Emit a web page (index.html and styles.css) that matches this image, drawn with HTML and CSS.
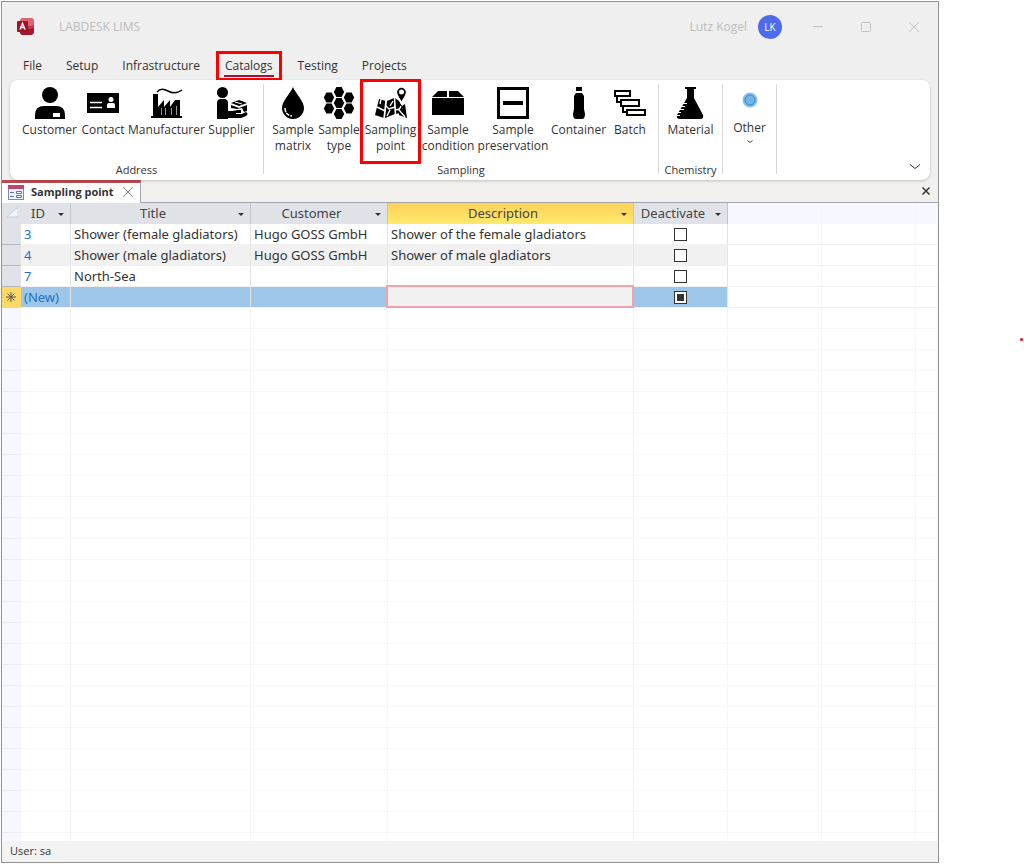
FILE: index.html
```html
<!DOCTYPE html>
<html lang="en">
<head>
<meta charset="utf-8">
<title>LABDESK LIMS</title>
<link rel="stylesheet" href="styles.css">
</head>
<body>
<div class="window">
  <header class="titlebar">
    <svg class="app-icon" width="18" height="18" viewBox="0 0 18 18" aria-hidden="true">
      <rect x="3" y="0" width="14" height="17" rx="4" fill="#c6324b"/>
      <path d="M3 3q0-3 4-3h6q4 0 4 3v3q-1 2-5 2H3z" fill="#dc6577"/>
      <path d="M3 11h9q4 0 5-2v5q-1 3-4 3H6q-3 0-3-3z" fill="#a3172f"/>
      <rect x="0" y="3" width="11" height="11" rx="1" fill="#a50f28"/>
      <path d="M3 11.500 5.500 5.500 8 11.500M4 9.500h3" fill="none" stroke="#fff" stroke-width="1.500"/>
    </svg>
    <span class="app-title">LABDESK LIMS</span>
    <span class="user-name">Lutz Kogel</span>
    <button class="avatar" type="button">LK</button>
    <div class="window-controls">
      <button type="button" aria-label="Minimize"><svg width="12" height="12" viewBox="0 0 12 12"><path d="M1 5.500h10"/></svg></button>
      <button type="button" aria-label="Maximize"><svg width="12" height="12" viewBox="0 0 12 12"><rect x="1.500" y="1.500" width="9" height="9" rx="1"/></svg></button>
      <button type="button" aria-label="Close"><svg width="12" height="12" viewBox="0 0 12 12"><path d="M1 1l10 10M11 1 1 11"/></svg></button>
    </div>
  </header>

  <nav class="menu">
    <button type="button">File</button>
    <button type="button">Setup</button>
    <button type="button">Infrastructure</button>
    <button type="button" class="active marked">Catalogs</button>
    <button type="button">Testing</button>
    <button type="button">Projects</button>
  </nav>

  <section class="ribbon">
    <div class="group">
      <div class="tools address">
        <button type="button"><svg width="32" height="32" viewBox="0 0 32 32"><circle cx="16" cy="8" r="8"/><path fill-rule="evenodd" d="M1 32v-4q0-9 9-9h12q9 0 9 9v4zM19 26v4h7v-4z"/></svg><span>Customer</span></button>
        <button type="button"><svg width="32" height="32" viewBox="0 0 32 32"><path d="M0 6h32v20H0z"/><path d="M3 15.500h12M3 20.500h12" stroke="#fff" stroke-width="1.500"/><circle cx="24" cy="12.500" r="2.500" fill="#fff"/><path d="M20 21v-3q0-2 2-2h4q2 0 2 2v3z" fill="#fff"/></svg><span>Contact</span></button>
        <button type="button"><svg width="32" height="32" viewBox="0 0 32 32"><path d="M0 31v-2h2V7h5v13l6-7v7l6-7v7l5-7h5v16h2v2z"/><path d="M6 5Q10 0 17 4t14-1" fill="none" stroke="#000" stroke-width="1.500"/><path d="M10.500 21v7M14.500 21v7M20.500 21v7M25.500 19v9" stroke="#fff" stroke-width=".6"/></svg><span>Manufacturer</span></button>
        <button type="button"><svg width="32" height="32" viewBox="0 0 32 32"><circle cx="6.500" cy="5.500" r="5.500"/><path d="M1 32V16q0-4 4-4h3q4 0 4 4v8h4l6-1h3v3h-5v1h6l4-2q3 2 0 4l-5 2H12v1zM15 16l8-3 8 3-8 3zM15 18l8 3 8-3v6l-3 1-2-4-5 1-6-1z"/><path d="M19 15l7 2" stroke="#fff"/></svg><span>Supplier</span></button>
      </div>
      <div class="group-name">Address</div>
    </div>
    <div class="group">
      <div class="tools sampling">
        <button type="button"><svg width="32" height="32" viewBox="0 0 32 32"><path d="M16 0c3 7 11 14 11 21a11 11 0 0 1-22 0C5 14 13 7 16 0z"/><path d="M8 21q0 7 7 8" fill="none" stroke="#fff" stroke-width="1.500" stroke-dasharray="4 1"/></svg><span>Sample matrix</span></button>
        <button type="button"><svg width="32" height="32" viewBox="0 0 32 32"><defs><path id="hex" d="M-5.200 0l2.600-4.900h5.200L5.200 0 2.600 4.900h-5.200z"/></defs><use href="#hex" x="16" y="5"/><use href="#hex" x="6" y="10.500"/><use href="#hex" x="26" y="10.500"/><use href="#hex" x="16" y="16"/><use href="#hex" x="6" y="21.500"/><use href="#hex" x="26" y="21.500"/><use href="#hex" x="16" y="27"/></svg><span>Sample type</span></button>
        <button type="button" class="marked"><svg width="32" height="32" viewBox="0 0 32 32"><path d="M4 12l7 2-2 17-9-3zM12 14l7-3 1 16-10 4zM20 11l4 3 3 5 3-2 2 14-11-4z"/><path d="M2 20l8 4M10 18l4 4 6-2M12 29l3-6M18 14l-3 5M20 23l5-1M26 19l-2 4 6 7M6 12l-1 5M20 28l4-1M11 13l-2 18M19.500 11l1 17" fill="none" stroke="#fff" stroke-width="1.400"/><path d="M26.500 1.500a3.500 3.500 0 0 1 3.500 3.700c0 2.300-2 5-3.500 8.300-1.500-3.300-3.500-6-3.500-8.300a3.500 3.500 0 0 1 3.500-3.700z" stroke="#fff" stroke-width="4"/><path d="M26.500 1.200a3.800 3.800 0 0 1 3.800 4c0 2.300-2 5-3.800 8.300-1.800-3.300-3.800-6-3.800-8.300a3.800 3.800 0 0 1 3.800-4z" stroke="#000"/><circle cx="26.500" cy="5" r="2.500" fill="#fff"/></svg><span>Sampling point</span></button>
        <button type="button"><svg width="32" height="32" viewBox="0 0 32 32"><path d="M6 4h9v6H0zM17 4h9l6 6H17zM0 11h32v17H0z"/></svg><span>Sample condition</span></button>
        <button type="button"><svg width="32" height="32" viewBox="0 0 32 32"><path d="M1.500 1.500h29v29h-29z" fill="none" stroke="#000" stroke-width="3"/><path d="M6 16h20" stroke="#000" stroke-width="4"/></svg><span>Sample preservation</span></button>
        <button type="button"><svg width="32" height="32" viewBox="0 0 32 32"><path d="M13 0h6v4h-6zM13 6h6l2 3v13l1 5q0 5-3 5h-6q-3 0-3-5l1-5V9z"/></svg><span>Container</span></button>
        <button type="button"><svg width="32" height="32" viewBox="0 0 32 32"><path d="M1 4h15v5H1zM7 13h18v6H7zM13 23h18v5H13zM3 9v6h4M9 19v6h4" fill="none" stroke="#000" stroke-width="2"/></svg><span>Batch</span></button>
      </div>
      <div class="group-name">Sampling</div>
    </div>
    <div class="group">
      <div class="tools chemistry">
        <button type="button"><svg width="32" height="32" viewBox="0 0 32 32"><path d="M10 0h11v2h-2v9l9 17q1 4-3 4H5q-4 0-3-4l10-17V2h-2z"/><path d="M7 16.500h5M6 19.500h4M4 22.500h5M2 25.500h4M1 28.500h4" stroke="#fff"/></svg><span>Material</span></button>
      </div>
      <div class="group-name">Chemistry</div>
    </div>
    <div class="group">
      <div class="tools other">
        <button type="button"><svg width="32" height="26" viewBox="0 0 32 26"><circle cx="16" cy="13" r="7.500" fill="#83c0ed"/><circle cx="16" cy="13" r="5" fill="#74b4e6" stroke="#3487c7"/></svg><span>Other</span><svg class="drop" width="8" height="6" viewBox="0 0 8 6"><path d="M1.500 1.500 4 3.500l2.500-2"/></svg></button>
      </div>
    </div>
    <button class="collapse" type="button" aria-label="Collapse ribbon"><svg width="12" height="8" viewBox="0 0 12 8"><path d="M1 1.500l5 4 5-4"/></svg></button>
  </section>

  <div class="doc-tabs">
    <div class="doc-tab">
      <svg width="16" height="15" viewBox="0 0 16 15" aria-hidden="true"><rect x=".5" y=".5" width="15" height="14" fill="#eef0fa" stroke="#8188ae"/><path d="M0 0h16v4H0z" fill="#bc4771"/><path d="M2 7.500h4M2 11.500h4" stroke="#6870a0"/><path d="M8.500 6.500h5v2h-5zM8.500 10.500h5v2h-5z" fill="#fff" stroke="#6870a0"/></svg>
      <span>Sampling point</span>
      <button type="button" aria-label="Close tab"><svg width="12" height="12" viewBox="0 0 12 12"><path d="M1 1l10 10M11 1 1 11"/></svg></button>
    </div>
    <button class="close-all" type="button" aria-label="Close"><svg width="8" height="8" viewBox="0 0 8 8"><path d="M.5.5l7 7M7.500.5l-7 7"/></svg></button>
  </div>

  <main class="sheet">
    <table>
      <colgroup><col class="c-select"><col class="c-id"><col class="c-title"><col class="c-customer"><col class="c-description"><col class="c-check"><col class="c-check"><col class="c-check"><col></colgroup>
      <thead>
        <tr>
          <th class="corner"><svg width="12" height="12" viewBox="0 0 12 12"><path d="M12 0v10H1z" fill="#f1f5f9" stroke="#c6d0d9"/></svg></th>
          <th><button type="button">ID</button></th>
          <th><button type="button">Title</button></th>
          <th><button type="button">Customer</button></th>
          <th class="current"><button type="button">Description</button></th>
          <th><button type="button">Deactivate</button></th>
          <td></td><td></td><td></td>
        </tr>
      </thead>
      <tbody>
        <tr class="record"><td></td><td class="id">3</td><td>Shower (female gladiators)</td><td>Hugo GOSS GmbH</td><td>Shower of the female gladiators</td><td class="check"><input type="checkbox" aria-label="Deactivate 3"></td><td></td><td></td><td></td></tr>
        <tr class="record alt"><td></td><td class="id">4</td><td>Shower (male gladiators)</td><td>Hugo GOSS GmbH</td><td>Shower of male gladiators</td><td class="check"><input type="checkbox" aria-label="Deactivate 4"></td><td></td><td></td><td></td></tr>
        <tr class="record"><td></td><td class="id">7</td><td>North-Sea</td><td></td><td></td><td class="check"><input type="checkbox" aria-label="Deactivate 7"></td><td></td><td></td><td></td></tr>
        <tr class="record new"><td><svg width="10" height="10" viewBox="0 0 10 10"><path d="M5 0v10M0 5h10M1.500 1.500l7 7M8.500 1.500l-7 7" stroke="#555"/></svg></td><td class="id">(New)</td><td></td><td></td><td class="editing"><input type="text" aria-label="Description"></td><td class="check"><input type="checkbox" checked aria-label="Deactivate new"></td><td></td><td></td><td></td></tr>
        <tr class="blank"><td></td><td></td><td></td><td></td><td></td><td></td><td></td><td></td><td></td></tr>
      </tbody>
    </table>
  </main>
  <footer class="status">User: sa</footer>
</div>
<span class="dot"></span>
</body>
</html>
```
FILE: styles.css
```css
* { box-sizing: border-box; }

body {
  margin: 0;
  min-height: 100vh;
  display: flex;
  padding: 1px 85px 1px 1px;
  background: #fff;
  color: #333;
  font: 12px/16px "Open Sans", "Noto Sans", sans-serif;
}

button {
  border: 0;
  padding: 0;
  background: none;
  color: inherit;
  font: inherit;
}

svg { display: block; flex: none; }

.window {
  flex: 1;
  min-width: 0;
  display: flex;
  flex-direction: column;
  border: 1px solid #929292;
  background: #efefef;
}

.titlebar {
  display: flex;
  align-items: center;
  height: 49px;
  padding: 0 18px 0 15px;
  color: #bdbdbd;
}

.app-title { margin-left: 24px; }
.user-name { margin-left: auto; }

.avatar {
  width: 24px;
  height: 24px;
  margin-left: 11px;
  border-radius: 50%;
  background: #4f6bed;
  color: #fff;
  font-size: 10px;
}

.window-controls {
  display: flex;
  gap: 36px;
  margin-left: 30px;
}

.window-controls svg,
.doc-tabs button svg,
.drop,
.collapse svg {
  fill: none;
  stroke: #c2c2c2;
}

.menu {
  display: flex;
  align-items: center;
  gap: 24px;
  height: 29px;
  padding-left: 21px;
}

.menu button {
  position: relative;
  padding: 3px 0;
}

.menu .active { padding: 3px 1px; }

.menu .active::before {
  content: "";
  position: absolute;
  inset: auto 0 0;
  height: 2px;
  background: #a4123a;
}

.marked { position: relative; }

.marked::after {
  content: "";
  position: absolute;
  border: 3px solid #f00;
  pointer-events: none;
}

.menu .marked::after { inset: -4px -8px; }

.ribbon {
  position: relative;
  display: flex;
  height: 100px;
  margin: 0 8px;
  padding: 4px 0 6px;
  border-radius: 8px;
  background: #fff;
  box-shadow: 0 1px 3px #0003;
}

.group {
  display: flex;
  flex-direction: column;
  justify-content: space-between;
  border-right: 1px solid #d8d8d8;
}

.tools {
  display: grid;
  padding: 3px 6px 0;
}

.address {
  grid-template-columns: 59px 48px 79px 51px;
  padding: 3px 6px 0 10px;
}

.sampling { grid-template-columns: 46px 46px 57px 58px 72px 59px 44px; }
.chemistry { grid-template-columns: 51px; }
.other { grid-template-columns: 41px; }

.tools button {
  display: flex;
  flex-direction: column;
  align-items: center;
  justify-content: flex-start;
  gap: 3px;
}

.tools .marked::after { inset: -8px -2px -10px; }

.other svg + span { margin-top: 4px; }
.other .drop { stroke: #444; }

.group-name {
  text-align: center;
  font-size: 11px;
  line-height: 8px;
}

.collapse {
  position: absolute;
  right: 9px;
  bottom: 9px;
}

.collapse svg { stroke: #333; }

.doc-tabs {
  display: flex;
  align-items: flex-start;
  justify-content: space-between;
  height: 23px;
  padding-right: 8px;
  border-bottom: 1px solid #a2a5a9;
  background: #f1f0ef;
}

.doc-tab {
  display: flex;
  align-items: center;
  gap: 7px;
  height: 23px;
  padding: 0 6px 2px;
  border-top: 3px solid #c0494f;
  border-right: 1px solid #a2a5a9;
  background: #fff;
  font-size: 11px;
  font-weight: 700;
}

.doc-tabs .doc-tab button { margin-left: 1px; }
.doc-tab button svg { stroke: #888; }
.close-all { padding-top: 7px; }
.doc-tabs .close-all svg { stroke: #333; stroke-width: 1.5; }

.sheet {
  flex: 1;
  display: grid;
  background: #fff;
}

table {
  width: 100%;
  height: 100%;
  table-layout: fixed;
  border-collapse: separate;
  border-spacing: 0;
  font-family: "Noto Sans", "Open Sans", sans-serif;
  font-size: 13px;
  line-height: 18px;
}

.c-select { width: 19px; }
.c-id { width: 50px; }
.c-title { width: 180px; }
.c-customer { width: 137px; }
.c-description { width: 246px; }
.c-check { width: 94px; }

th, td {
  padding: 0 3px;
  border-right: 1px solid #f5f5f5;
  white-space: nowrap;
}

thead tr { height: 21px; }

th {
  padding: 0 0 2px;
  border-right-color: #bfc5cc;
  background: #dfe3e8;
  font-weight: 400;
}

th.corner { padding-left: 4px; border-right-color: #dfe3e8; }
th.current { background: linear-gradient(#ffd15a, #ffe96b); }
thead td { background: #f7f8ff; }

th button {
  position: relative;
  display: block;
  width: 100%;
  padding-right: 15px;
  color: #444;
}

th button::after {
  content: "";
  position: absolute;
  right: 6px;
  top: 9px;
  border: 3px solid transparent;
  border-top-color: #333;
  border-bottom: 0;
}

.record { height: 21px; }
.record td { border-bottom: 1px solid #f0f0f0; }
.record td:nth-child(-n+6) { border-right-color: #e4e4e4; }
.record td:first-child {
  padding: 0 4px;
  border-bottom-color: #b3b8be;
  background: #dfe3e8;
}

.record .id { color: #1d6fc9; }
.alt td:nth-child(-n+6) { background: #f1f1f1; }
.new td:nth-child(-n+6) { background: #9dc6e9; }
.record.new td:first-child { background: #ffd966; border-color: #ffd966; }
.record.alt td:first-child { background: #dfe3e8; }

.check input {
  appearance: none;
  display: block;
  width: 13px;
  height: 13px;
  margin: 0 auto;
  border: 1px solid #333;
  background: #fff;
}

.check input:checked {
  background: #333;
  box-shadow: inset 0 0 0 2px #fff;
}

.new td.editing { position: relative; }

.editing input {
  position: absolute;
  inset: -2px -2px -1px;
  width: calc(100% + 3px);
  border: 2px solid #f2a3aa;
  background: #f1f1f1;
  font: inherit;
}

.blank td {
  background: repeating-linear-gradient(#fff 0 20px, #f7f7f7 20px 21px);
}

.blank td:first-child {
  background: repeating-linear-gradient(#f6f7ff 0 20px, #ececf2 20px 21px);
}

.status {
  height: 21px;
  padding: 2px 8px;
  background: #f3f3f3;
  font-size: 11px;
}

.dot {
  position: absolute;
  right: 1px;
  top: 338px;
  width: 3px;
  height: 3px;
  border-radius: 50%;
  background: #f00;
}
```
